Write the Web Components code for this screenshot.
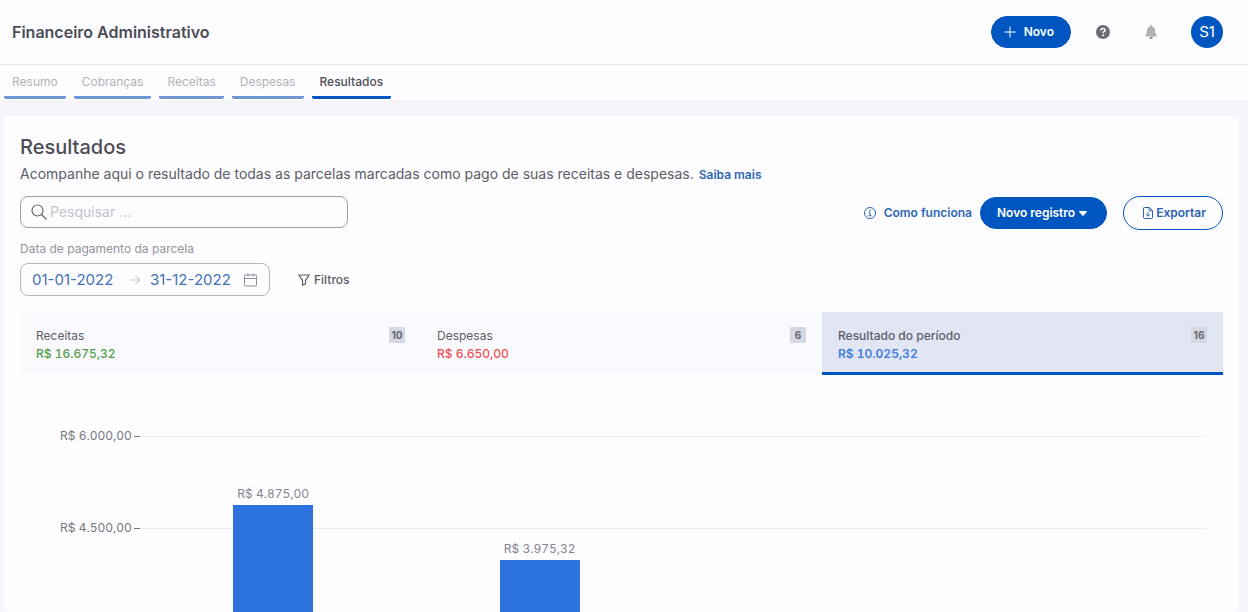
<!DOCTYPE html>
<html lang="pt-BR">
  <head>
    <meta charset="utf-8" />
    <meta name="viewport" content="width=device-width, initial-scale=1.0" />
    <title>Financeiro Administrativo</title>
    <style>
      :root {
        --primary: #0056c1;
        --surface: #fdfcff;
        --page: #f5f5fb;
        --text: #4c4c56;
        --muted: #85858d;
      }

      body {
        display: flex;
        flex-direction: column;
        margin: 0;
        height: 100vh;
        background: var(--page);
        color: var(--text);
        font: 12px/18px Inter, "Liberation Sans", sans-serif;
      }
    </style>
  </head>
  <body>
    <app-header heading="Financeiro Administrativo">
      <pill-button icon="plus">Novo</pill-button>
      <icon-button icon="help" label="Ajuda"></icon-button>
      <icon-button icon="bell" label="Notificações"></icon-button>
      <user-avatar>S1</user-avatar>
    </app-header>
    <tab-bar>
      <tab-link>Resumo</tab-link>
      <tab-link>Cobranças</tab-link>
      <tab-link>Receitas</tab-link>
      <tab-link>Despesas</tab-link>
      <tab-link active>Resultados</tab-link>
    </tab-bar>
    <results-panel></results-panel>

    <script>
      const icons = {
        plus: `<svg width="12" height="12" viewBox="0 0 12 12" fill="none" stroke="currentColor"><path d="M6 .5v11M.5 6h11"/></svg>`,
        help: `<svg width="14" height="14" viewBox="0 0 14 14"><circle cx="7" cy="7" r="7" fill="#6c6c78"/><path d="M5 5.5C5 4.2 5.9 3.5 7 3.5s2 .7 2 1.8C9 6.7 7.1 6.7 7.1 8" fill="none" stroke="#fff" stroke-width="1.6"/><circle cx="7.1" cy="10.2" r="1" fill="#fff"/></svg>`,
        bell: `<svg width="12" height="14" viewBox="0 0 12 14"><path d="M6 0c-.6 0-1 .4-1 1v.5C3.100 2 2 3.500 2 5.500 2 8.500 1 9.300.3 10.200c-.5.700-.1 1.300.6 1.300h10.200c.7 0 1.100-.6.6-1.300C11 9.300 10 8.500 10 5.500c0-2-1.100-3.500-3-4V1c0-.6-.4-1-1-1z" fill="#b0b0b4"/><path d="M4.200 12.300h3.600C7.700 13.400 7 14 6 14s-1.700-.6-1.800-1.700z" fill="#77777c"/></svg>`,
        search: `<svg width="16" height="16" viewBox="0 0 16 16" fill="none" stroke="#66666f" stroke-width="1.200" stroke-linecap="round"><circle cx="6.500" cy="6.500" r="5.500"/><path d="m10.500 10.500 4.500 4.500"/></svg>`,
        arrow: `<svg width="12" height="12" viewBox="0 0 12 12" fill="none" stroke="#d2d2d9" stroke-width="1.300"><path d="M1 6h10M6.500 1.500 11 6l-4.500 4.500"/></svg>`,
        calendar: `<svg width="14" height="14" viewBox="0 0 14 14" fill="none" stroke="#8e8e98"><rect x=".5" y="2" width="12" height="11" rx="1"/><path d="M.5 5.500h12M4 .5v3M9 .5v3"/></svg>`,
        funnel: `<svg width="12" height="12" viewBox="0 0 12 12" fill="none" stroke="currentColor" stroke-width="1.200" stroke-linejoin="round"><path d="M.7 1h10.600L7.500 6.300V10L4.500 11.200V6.300z"/></svg>`,
        info: `<svg width="12" height="12" viewBox="0 0 12 12" fill="none" stroke="currentColor"><circle cx="6" cy="6" r="5.500"/><path d="M4.800 5.200H6v3.300M4.500 8.700h3"/><circle cx="6" cy="3.300" r=".4"/></svg>`,
        caret: `<svg width="8" height="5" viewBox="0 0 8 5" fill="currentColor"><path d="M.6 0h6.800c.5 0 .7.500.4.900L4.600 4.600c-.3.400-.9.400-1.200 0L.2.900C-.1.500.1 0 .6 0z"/></svg>`,
        file: `<svg width="10" height="12" viewBox="0 0 10 12" fill="none" stroke="currentColor"><path d="M1.500.5h5L9.500 3.500v7a1 1 0 0 1-1 1h-7a1 1 0 0 1-1-1v-9a1 1 0 0 1 1-1zM6.200.5v3.300h3.300M5 5v4M3 7.300 5 9.300l2-2"/></svg>`,
      };

      const define = (name, render) => {
        customElements.define(
          name,
          class extends HTMLElement {
            constructor() {
              super();
              const template = document.createElement("template");
              template.innerHTML = render(this);
              this.attachShadow({ mode: "open" });
              this.shadowRoot.appendChild(template.content.cloneNode(true));
            }
          }
        );
      };

      define("app-header", (el) => `
        <style>
          :host { display: block; background: var(--surface); border-bottom: 1px solid #e6e6ec; }
          header { display: flex; align-items: center; gap: 16px; height: 64px; padding: 0 25px 0 12px; }
          h1 { flex: 1; margin: 0; font-size: 16px; line-height: 24px; font-weight: 600; }
        </style>
        <header><h1>${el.getAttribute("heading")}</h1><slot></slot></header>
      `);

      define("pill-button", (el) => `
        <style>
          :host { display: block; }
          button {
            display: flex; align-items: center; gap: 8px; height: 32px; padding: 0 16px;
            border: 1px solid var(--primary); border-radius: 17px;
            background: var(--primary); color: #fff; font: inherit; font-weight: 600;
          }
          :host([icon="plus"]) button { padding: 0 16px 0 12px; }
          :host([icon="caret"]) button { flex-direction: row-reverse; gap: 4px; padding: 0 19px 0 16px; }
          :host([outline]) button {
            gap: 3px; height: 34px; padding: 0 16px 0 19px;
            background: transparent; color: #2c62b0;
          }
        </style>
        <button type="button">${icons[el.getAttribute("icon")]}<span><slot></slot></span></button>
      `);

      define("icon-button", (el) => `
        <style>
          :host { display: block; }
          button { display: grid; place-items: center; width: 32px; height: 32px; padding: 0; border: 0; background: none; }
        </style>
        <button type="button" aria-label="${el.getAttribute("label")}">${icons[el.getAttribute("icon")]}</button>
      `);

      define("user-avatar", () => `
        <style>
          :host {
            display: grid; place-items: center; width: 32px; height: 32px; margin-left: 8px;
            border-radius: 50%; background: var(--primary); color: #fff; font-size: 15px;
          }
        </style>
        <slot></slot>
      `);

      define("tab-bar", () => `
        <style>
          :host { display: block; background: var(--surface); }
          nav { display: flex; gap: 8px; padding: 0 4px 1px; }
        </style>
        <nav><slot></slot></nav>
      `);

      define("tab-link", () => `
        <style>
          :host { display: block; }
          a {
            display: block; padding: 8px 8px 5px; border-bottom: 3px solid #6e97d3;
            border-radius: 2px; color: #b3b3b9; text-decoration: none;
          }
          :host([active]) a { border-color: var(--primary); color: var(--text); font-weight: 500; }
        </style>
        <a href="#"><slot></slot></a>
      `);

      define("search-field", () => `
        <style>
          :host { display: block; }
          label {
            display: flex; align-items: center; gap: 3px; box-sizing: border-box;
            width: 328px; height: 32px; padding: 0 10px;
            border: 1px solid #a3a3aa; border-radius: 8px;
          }
          input { flex: 1; min-width: 0; padding: 0; border: 0; outline: 0; background: none; color: inherit; font: inherit; font-size: 14px; }
          input::placeholder { color: #c3c3cb; opacity: 1; }
        </style>
        <label>${icons.search}<input type="search" placeholder="Pesquisar ..." aria-label="Pesquisar" /></label>
      `);

      define("date-range", () => `
        <style>
          :host { display: block; }
          label { display: block; color: #94949b; }
          .box {
            display: flex; align-items: center; box-sizing: border-box; width: 250px; height: 33px;
            margin-top: 5px; padding: 0 11px; border: 1px solid #b5b5bc; border-radius: 8px;
          }
          input {
            width: 88px; padding: 0; border: 0; outline: 0; background: none;
            color: #4272b8; font: inherit; font-size: 15px;
          }
          .arrow { display: grid; place-items: center; width: 30px; }
          .calendar { display: flex; margin-left: auto; }
        </style>
        <label for="from">Data de pagamento da parcela</label>
        <div class="box">
          <input id="from" type="text" value="01-01-2022" />
          <span class="arrow">${icons.arrow}</span>
          <input type="text" value="31-12-2022" aria-label="Data final" />
          <span class="calendar">${icons.calendar}</span>
        </div>
      `);

      define("text-action", (el) => `
        <style>
          :host { display: block; color: #2f67b5; font-weight: 600; }
          :host([quiet]) { color: #5c5c66; font-weight: 500; }
          button { display: flex; align-items: center; gap: 8px; padding: 0; border: 0; background: none; color: inherit; font: inherit; line-height: 32px; }
          :host([quiet]) button { gap: 4px; }
        </style>
        <button type="button">${icons[el.getAttribute("icon")]}<span><slot></slot></span></button>
      `);

      define("summary-card", (el) => `
        <style>
          :host { display: block; flex: 1; background: #fafafe; }
          button {
            display: flex; justify-content: space-between; align-items: flex-start;
            width: 100%; padding: 15px 16px 9px; border: 0; border-bottom: 3px solid transparent;
            background: none; color: #5c5c66; font: inherit; text-align: left;
          }
          span { display: block; }
          .amount { color: var(--amount); font-weight: 500; font-variant-numeric: tabular-nums; }
          .count {
            width: 16px; background: #d5d7e1; color: #666671;
            font-size: 10px; line-height: 16px; font-weight: 700; text-align: center;
          }
          :host([active]) { background: #e2e5f4; }
          :host([active]) button { border-color: var(--primary); font-weight: 500; }
          :host([active]) .amount { font-weight: 600; }
        </style>
        <button type="button">
          <span><slot></slot><span class="amount">${el.getAttribute("amount")}</span></span>
          <span class="count">${el.getAttribute("count")}</span>
        </button>
      `);

      // distance between two grid lines, R$ 1.500,00 apart
      const ROW = 92;
      const TOP = 6000;
      const STEP = 1500;

      define("bar-chart", () => {
        const ticks = ["R$ 6.000,00", "R$ 4.500,00"];
        const bars = [
          { value: 4875, label: "R$ 4.875,00" },
          { value: 3975.32, label: "R$ 3.975,32" },
        ];
        const offset = (value) => Math.round(((TOP - value) / STEP) * ROW);

        return `
          <style>
            :host { display: grid; padding: 52px 17px 0 40px; font-variant-numeric: tabular-nums; }
            .ticks, .bars { grid-area: 1 / 1; }
            .ticks { display: flex; flex-direction: column; gap: ${ROW - 18}px; }
            .tick { display: grid; grid-template-columns: 74px 6px 1fr; align-items: center; height: 18px; color: #777780; }
            .dash { height: 1px; background: #74747c; }
            .line { height: 1px; background: #eaeaef; }
            .bars { display: grid; grid-template-columns: repeat(4, 1fr); padding: 9px 0 0 80px; }
            .column { display: flex; flex-direction: column; align-items: center; color: var(--muted); }
            .column span { margin-top: -20px; padding-bottom: 2px; }
            .bar { flex: 1; width: 30%; background: #2c73dd; }
          </style>
          <div class="ticks">
            ${ticks.map((t) => `<div class="tick"><span>${t}</span><i class="dash"></i><i class="line"></i></div>`).join("")}
          </div>
          <div class="bars">
            ${bars
              .map((b) => `<div class="column" style="padding-top: ${offset(b.value)}px"><span>${b.label}</span><div class="bar"></div></div>`)
              .join("")}
          </div>
        `;
      });

      define("results-panel", () => `
        <style>
          :host {
            display: flex; flex: 1; flex-direction: column; margin: 16px 9px 0 4px;
            padding: 16px 16px 0; border-radius: 4px; background: var(--surface);
          }
          h2 { margin: 0; font-size: 20px; line-height: 30px; font-weight: 500; }
          p { margin: 0; font-size: 14px; line-height: 24px; color: #5c5c66; }
          a { margin-left: 1px; color: #2f67b5; font-size: 12px; font-weight: 600; text-decoration: none; }
          .toolbar, .actions, .filters, .summary { display: flex; }
          .toolbar { align-items: flex-start; justify-content: space-between; margin-top: 9px; }
          .actions { align-items: center; }
          .actions text-action { margin-right: 8px; }
          .actions pill-button[outline] { margin-left: 16px; }
          .filters { align-items: flex-end; gap: 28px; margin-top: 10px; }
          .summary { margin-top: 16px; }
          bar-chart { flex: 1; }
        </style>
        <h2>Resultados</h2>
        <p>Acompanhe aqui o resultado de todas as parcelas marcadas como pago de suas receitas e despesas. <a href="#">Saiba mais</a></p>
        <div class="toolbar">
          <search-field></search-field>
          <div class="actions">
            <text-action icon="info">Como funciona</text-action>
            <pill-button icon="caret">Novo registro</pill-button>
            <pill-button icon="file" outline>Exportar</pill-button>
          </div>
        </div>
        <div class="filters">
          <date-range></date-range>
          <text-action icon="funnel" quiet>Filtros</text-action>
        </div>
        <div class="summary">
          <summary-card amount="R$ 16.675,32" count="10" style="--amount: #519d4b">Receitas</summary-card>
          <summary-card amount="R$ 6.650,00" count="6" style="--amount: #ef5059">Despesas</summary-card>
          <summary-card amount="R$ 10.025,32" count="16" style="--amount: #3f7dda" active>Resultado do período</summary-card>
        </div>
        <bar-chart></bar-chart>
      `);
    </script>
  </body>
</html>
